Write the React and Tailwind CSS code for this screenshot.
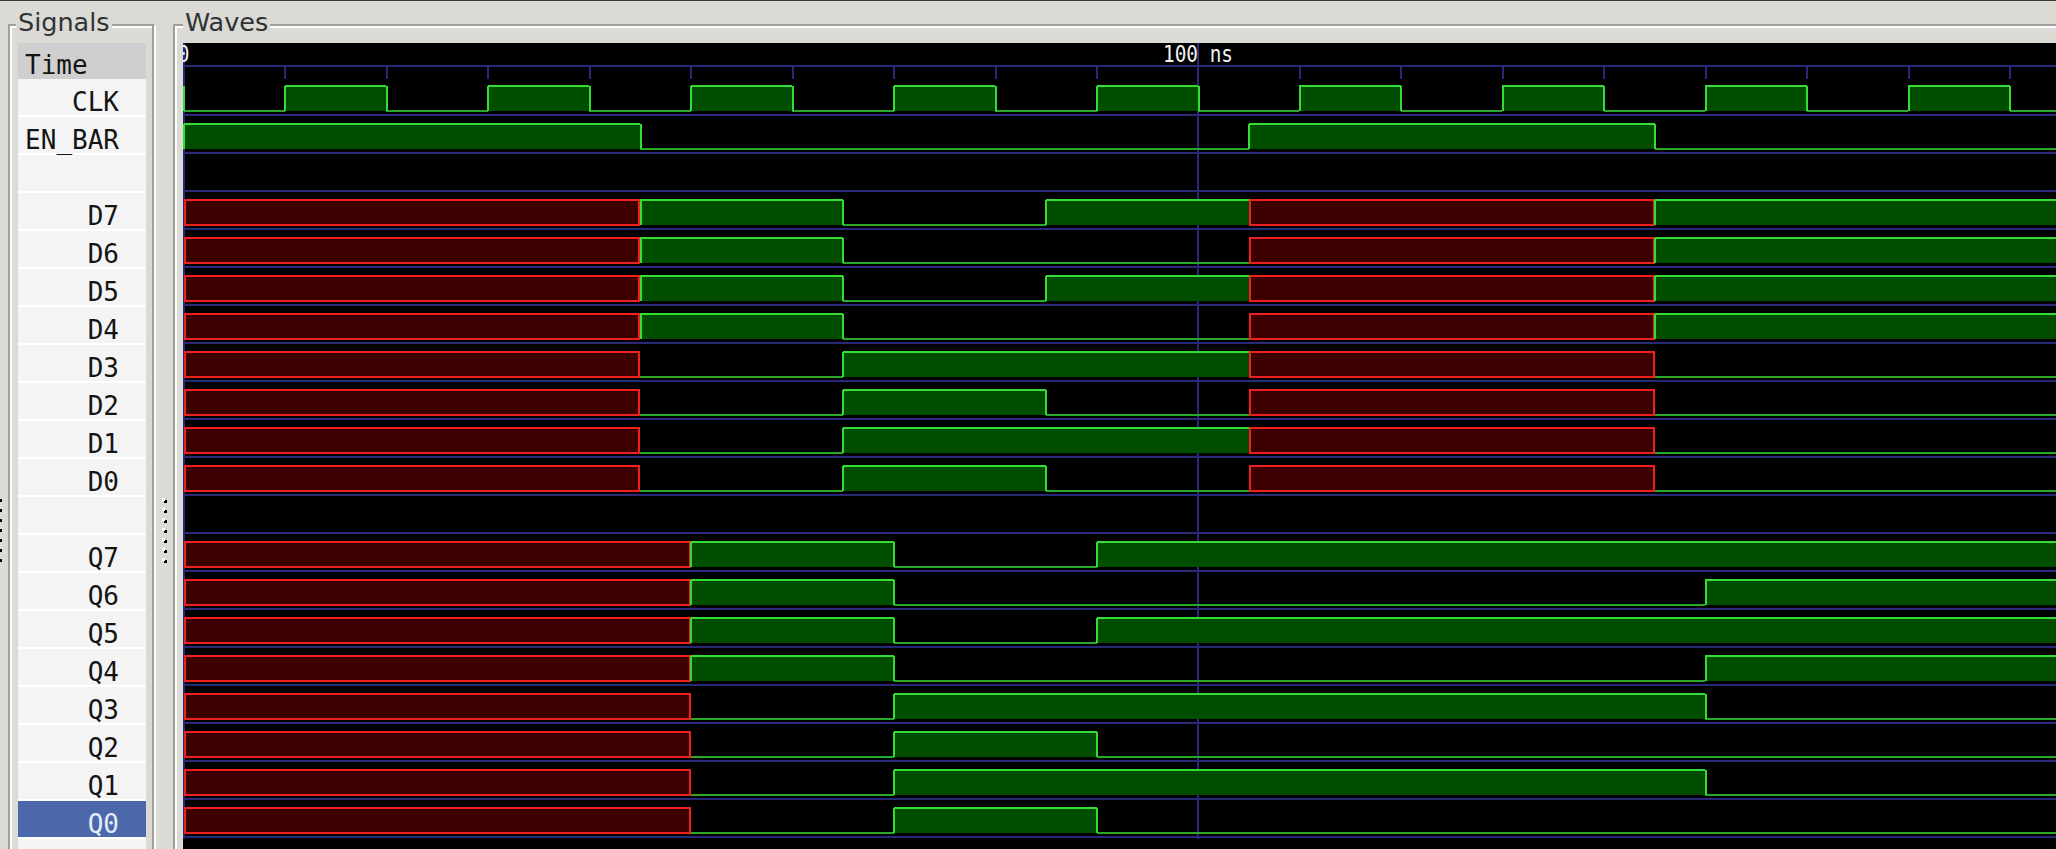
import React from "react";

const K = 10.145;
const X = (t) => 0.5 + K * t;
const W = 1873;
const NAVY = "#29297a";
const GH = "#33dd33";
const GL = "#2aa82a";
const GF = "#004d00";
const RL = "#ee2020";
const RF = "#3d0000";
const END = 200;

const clk = [];
for (let t = 0; t < END; t += 10) clk.push([t, (t / 10) % 2 === 0 ? "0" : "1"]);

const D_A = [[0, "x"], [45, "1"], [65, "0"], [85, "1"], [105, "x"], [145, "1"]];
const D_B = [[0, "x"], [45, "1"], [65, "0"], [105, "x"], [145, "1"]];
const D_C = [[0, "x"], [45, "0"], [65, "1"], [105, "x"], [145, "0"]];
const D_D = [[0, "x"], [45, "0"], [65, "1"], [85, "0"], [105, "x"], [145, "0"]];
const Q_A = [[0, "x"], [50, "1"], [70, "0"], [90, "1"]];
const Q_B = [[0, "x"], [50, "1"], [70, "0"], [150, "1"]];
const Q_C = [[0, "x"], [50, "0"], [70, "1"], [150, "0"]];
const Q_D = [[0, "x"], [50, "0"], [70, "1"], [90, "0"]];

const ROWS = [
  { name: "CLK", w: clk },
  { name: "EN_BAR", w: [[0, "1"], [45, "0"], [105, "1"], [145, "0"]] },
  { name: "", w: null },
  { name: "D7", w: D_A },
  { name: "D6", w: D_B },
  { name: "D5", w: D_A },
  { name: "D4", w: D_B },
  { name: "D3", w: D_C },
  { name: "D2", w: D_D },
  { name: "D1", w: D_C },
  { name: "D0", w: D_D },
  { name: "", w: null },
  { name: "Q7", w: Q_A },
  { name: "Q6", w: Q_B },
  { name: "Q5", w: Q_A },
  { name: "Q4", w: Q_B },
  { name: "Q3", w: Q_C },
  { name: "Q2", w: Q_D },
  { name: "Q1", w: Q_C },
  { name: "Q0", w: Q_D, sel: true },
];

function Wave({ changes }) {
  const els = [];
  if (changes) {
    const s = changes.map((c, i) => [c[0], i + 1 < changes.length ? changes[i + 1][0] : END, c[1]]);
    s.forEach(([t0, t1, v], i) => {
      const x0 = X(t0);
      const x1 = Math.min(X(t1), W + 10);
      if (v === "1") {
        els.push(<rect key={"f" + i} x={x0} y={7} width={x1 - x0} height={25} fill={GF} />);
        els.push(<line key={"t" + i} x1={x0} x2={x1} y1={7} y2={7} stroke={GH} strokeWidth={2} />);
      } else if (v === "0") {
        els.push(<line key={"l" + i} x1={x0} x2={x1} y1={32} y2={32} stroke={GL} strokeWidth={2} />);
      } else {
        els.push(
          <rect key={"x" + i} x={x0 + 1} y={7} width={x1 - x0 - 2} height={25} fill={RF} stroke={RL} strokeWidth={2} />
        );
      }
    });
    s.forEach(([t0, , v], i) => {
      const prev = i > 0 ? s[i - 1][2] : null;
      if (v === "x") return;
      if (i === 0 || v === "1" || prev === "1") {
        els.push(
          <line key={"e" + i} x1={X(t0) + 0.5} x2={X(t0) + 0.5} y1={7} y2={32} stroke={GH} strokeWidth={2} />
        );
      }
    });
  }
  return (
    <svg width={W} height={38} className="block shrink-0" shapeRendering="crispEdges">
      <rect x={0} y={0} width={2} height={38} fill={NAVY} />
      <rect x={X(100) - 1} y={0} width={2} height={38} fill={NAVY} />
      {els}
      <rect x={0} y={35} width={W} height={2} fill={NAVY} />
    </svg>
  );
}

function Ruler() {
  const ticks = [];
  for (let t = 10; t <= 180; t += 10) {
    if (t === 100) continue;
    ticks.push(<rect key={t} x={X(t) - 0.5} y={23} width={2} height={13} fill={NAVY} />);
  }
  return (
    <svg width={W} height={36} className="block shrink-0">
      <g shapeRendering="crispEdges">
        <rect x={0} y={0} width={2} height={36} fill={NAVY} />
        <rect x={X(100) - 1} y={0} width={2} height={36} fill={NAVY} />
        <rect x={0} y={22} width={W} height={2} fill={NAVY} />
        {ticks}
      </g>
      <text
        x={X(0)}
        y={19}
        textAnchor="middle"
        fill="#f2f2f2"
        fontSize={23}
        fontFamily="'DejaVu Sans Mono', monospace"
        textLength={11.7}
        lengthAdjust="spacingAndGlyphs"
      >
        0
      </text>
      <text
        x={X(100)}
        y={19}
        textAnchor="middle"
        fill="#f2f2f2"
        fontSize={23}
        fontFamily="'DejaVu Sans Mono', monospace"
        textLength={70}
        lengthAdjust="spacingAndGlyphs"
      >
        100 ns
      </text>
    </svg>
  );
}

const DOTS = [0, 1, 2, 3, 4, 5, 6];

export default function App() {
  return (
    <div className="w-[2056px] h-[849px] overflow-hidden bg-[#dcdad5] border-t border-[#3c3c3c] flex items-start font-['DejaVu_Sans',sans-serif]">
      {/* left pane handle */}
      <div className="w-[8px] shrink-0 flex flex-col gap-[7px] pt-[498px]">
        {DOTS.map((i) => (
          <div key={i} className="w-[2px] h-[3px] bg-black" />
        ))}
      </div>

      {/* Signals frame */}
      <div className="relative mt-[23px] w-[146px] h-[880px] shrink-0 border-2 border-[#9f9e9a] shadow-[inset_2px_2px_0_#ffffff,2px_2px_0_#ffffff] pl-[8px] pr-[6px] pt-[17px] flex flex-col">
        <span className="absolute left-[6px] top-[-16px] px-[2px] bg-[#dcdad5] text-[25.5px] leading-[25px] text-[#2e3436]">
          Signals
        </span>
        <div className="flex-1 bg-[#f4f4f4] flex flex-col font-['DejaVu_Sans_Mono',monospace] text-[26px] leading-[26px] text-[#141414]">
          <div className="h-[36px] shrink-0 bg-[#cfcfcf] pl-[7px] pt-[9px]">Time</div>
          {ROWS.map((r, i) => (
            <div
              key={i}
              className={
                r.sel
                  ? "h-[38px] shrink-0 border-b-2 border-white bg-[#4a68aa] text-[#e4ecf8] text-right pr-[27px] pt-[10px]"
                  : "h-[38px] shrink-0 border-b-2 border-white text-right pr-[27px] pt-[10px]"
              }
            >
              {r.name}
            </div>
          ))}
        </div>
      </div>

      {/* middle pane handle */}
      <div className="w-[19px] shrink-0 flex flex-col gap-[7px] pl-[8px] pt-[497px]">
        {DOTS.map((i) => (
          <div key={i} className="w-[3px] h-[3px] bg-white shadow-[2px_2px_0_#000000]" />
        ))}
      </div>

      {/* Waves frame */}
      <div className="relative mt-[23px] w-[1950px] h-[880px] shrink-0 border-2 border-[#9f9e9a] shadow-[inset_2px_2px_0_#ffffff] pl-[8px] pt-[17px] flex flex-col">
        <span className="absolute left-[8px] top-[-16px] px-[2px] bg-[#dcdad5] text-[25.5px] leading-[25px] text-[#2e3436]">
          Waves
        </span>
        <div className="w-[1873px] flex-1 bg-black flex flex-col">
          <Ruler />
          {ROWS.map((r, i) => (
            <Wave key={i} changes={r.w} />
          ))}
        </div>
      </div>
    </div>
  );
}
